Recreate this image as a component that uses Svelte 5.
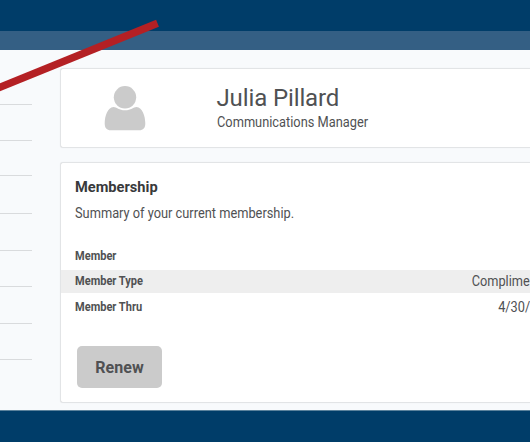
<script>
  const gaps = [54, 36, 35, 38, 37, 36, 37, 36];
  const rows = [
    { label: 'Member', value: '' },
    { label: 'Member Type', value: 'Complime', shaded: true },
    { label: 'Member Thru', value: '4/30/' }
  ];
</script>

<div class="page">
  <header></header>
  <div class="strip"></div>
  <main>
    <nav>
      {#each gaps as gap}
        <div class="item" style="height: {gap}px"></div>
      {/each}
    </nav>
    <div class="content">
      <section class="card profile">
        <svg class="avatar" width="42" height="46" viewBox="0 0 42 46" aria-hidden="true">
          <path d="M9.500 21C3.500 21.600 .7 30 .7 37.500C.7 42 3 44.300 6.500 44.300H35.500C39 44.300 41.300 42 41.300 37.500C41.300 30 38.500 21.600 32.500 21C29.500 21 27 24.300 21 24.300S12.500 21 9.500 21Z" />
          <circle cx="21" cy="11.300" r="11.200" />
        </svg>
        <div class="who">
          <h1>Julia Pillard</h1>
          <p>Communications Manager</p>
        </div>
      </section>
      <section class="card membership">
        <h2>Membership</h2>
        <p class="summary">Summary of your current membership.</p>
        <div class="rows">
          {#each rows as row}
            <div class="row" class:shaded={row.shaded}>
              <b>{row.label}</b><span>{row.value}</span>
            </div>
          {/each}
        </div>
        <button>Renew</button>
      </section>
    </div>
  </main>
  <footer></footer>
  <svg class="pointer" width="160" height="95" viewBox="0 0 160 95" aria-hidden="true">
    <path d="M-4 88.800L157.500 23.300" />
  </svg>
</div>

<style>
  .page {
    position: relative;
    width: 530px;
    height: 442px;
    overflow: hidden;
    display: flex;
    flex-direction: column;
    font-family: Roboto, "Liberation Sans", sans-serif;
    color: #505153;
    background: #f8fafc;
  }
  header { height: 31px; background: #003d69; }
  .strip { height: 19px; background: #345f84; }
  main { height: 360px; display: flex; }
  footer { height: 31px; background: #003d69; border-top: 1px solid #5b829c; }
  nav { width: 32px; padding-top: 1px; margin-right: 28px; }
  .item { box-sizing: border-box; border-bottom: 1px solid #d9dbdd; }
  .content {
    flex: 1;
    padding-top: 18px;
    display: flex;
    flex-direction: column;
    gap: 14px;
    min-width: 0;
  }
  .card {
    box-sizing: border-box;
    background: #fff;
    border: 1px solid #e2e4e6;
    border-right: 0;
    border-radius: 3px 0 0 3px;
    box-shadow: 0 0 1px #e8eaec;
  }
  .profile { height: 80px; display: flex; padding: 17px 0 0 43px; }
  .avatar { fill: #cbcbcb; }
  .who { margin-left: 70.500px; white-space: nowrap; }
  h1, h2, p { margin: 0; }
  h1 { font-size: 24px; font-weight: 400; line-height: 26px; letter-spacing: -.12px; margin-top: -1px; }
  .who p { font-size: 14px; line-height: 18px; margin-top: 2px; transform: scaleX(.915); transform-origin: left; }
  .membership { height: 241px; padding-top: 15px; }
  h2, .summary { margin-left: 13.500px; transform-origin: left; }
  h2 { font-size: 15px; line-height: 18px; font-weight: 700; transform: scaleX(.975); color: #38393b; }
  .summary { font-size: 14px; line-height: 18px; transform: scaleX(.915); margin-top: 8px; }
  .rows { margin-top: 22px; }
  .row {
    height: 23.500px;
    margin-bottom: 2px;
    padding-left: 13.500px;
    display: flex;
    align-items: center;
    justify-content: space-between;
    font-size: 14px;
    white-space: nowrap;
  }
  .row b { font-size: 12px; font-weight: 700; transform: translateY(-.3px) scaleX(.92); transform-origin: left; }
  .row span { transform: translateY(-.5px) scaleX(.91); transform-origin: right; }
  .shaded { background: #eee; }
  button {
    display: block;
    width: 85px;
    height: 42px;
    margin: 27.500px 0 0 16px;
    padding: 0;
    border: 0;
    border-radius: 5px;
    background: #cbcbcb;
    color: #505153;
    font: 700 16px Roboto, "Liberation Sans", sans-serif;
    letter-spacing: .1px;
  }
  .pointer { position: absolute; left: 0; top: 0; }
  .pointer path { stroke: #b42024; stroke-width: 7.500; fill: none; }
</style>
